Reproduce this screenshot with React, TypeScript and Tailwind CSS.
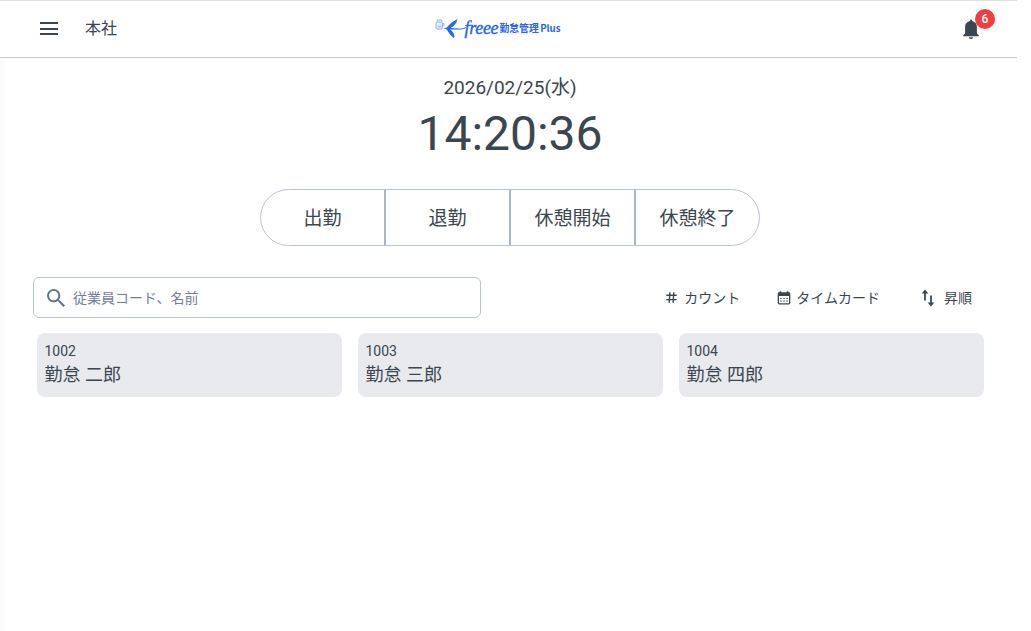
import { useState } from 'react';

interface Employee {
    code: string;
    name: string;
}

const employees: Employee[] = [
    { code: '1002', name: '勤怠 二郎' },
    { code: '1003', name: '勤怠 三郎' },
    { code: '1004', name: '勤怠 四郎' },
];

const actions = ['出勤', '退勤', '休憩開始', '休憩終了'];

function Logo() {
    return (
        <div className="flex items-center h-8 w-[127px] text-[#2864f0] whitespace-nowrap">
            <svg width="31" height="22" viewBox="0 0 31 22" className="shrink-0" fill="none">
                <g stroke="#7fa6f6" strokeWidth=".9">
                    <rect x="1" y="4" width="6.5" height="7" rx="1.5" fill="#e6eefe" />
                    <path d="M2 3.500 2.500 2h4l.5 1.500M3 7.500a1.500 1.500 0 1 0 3-.3M7.500 5.500h1.500v3" />
                </g>
                <path
                    d="M22.500 1C18.500 3 14 6.300 11.800 9.600L8.800 10.500l3 1.100c1.600 3 4.200 6.500 7.300 8.600.5-1.600.3-3.200-.5-4.700-.8-1.600-2-2.800-3.600-3.900l8-.2v-1l-7.500-.5c3.500-1.700 6-4.200 7-8.900z"
                    fill="currentColor"
                />
                <path d="M22.500 10.900c3 .4 5.500-.1 8.500-1.300" stroke="currentColor" strokeWidth="1" />
            </svg>
            <span className="w-[33px] -ml-[1px] text-[18px] leading-none italic tracking-[-0.3px] font-['Liberation_Serif',serif] [-webkit-text-stroke:0.4px] -mt-[3px]">
                freee
            </span>
            <span className="ml-[2px] text-[9.8px] leading-none font-bold font-['Noto_Sans_CJK_JP',sans-serif]">勤怠管理</span>
            <span className="ml-[1.5px] text-[9.600px] leading-none font-bold font-['Noto_Sans_CJK_JP',sans-serif]">Plus</span>
        </div>
    );
}

function BellIcon() {
    return (
        <svg width="16" height="21" viewBox="0 0 16 21" fill="currentColor">
            <path d="M7 1.300a1.200 1.200 0 0 1 2 0v.8c3 .5 4.900 2.700 4.900 5.700v6.700l1.900 1.800v1H.2v-1l1.900-1.800V7.800c0-3 1.900-5.200 4.900-5.700zM5.900 18.200h4.200a2.100 1.700 0 0 1-4.200 0z" />
        </svg>
    );
}

function SearchIcon() {
    return (
        <svg width="18" height="18" viewBox="3 3 17.500 17.500" fill="#64748b">
            <path d="M15.500 14h-.79l-.28-.27A6.471 6.471 0 0 0 16 9.500 6.500 6.500 0 1 0 9.500 16c1.610 0 3.090-.59 4.230-1.570l.27.28v.79l5 4.990L20.490 19l-4.990-5zm-6 0C7.010 14 5 11.990 5 9.500S7.010 5 9.500 5 14 7.010 14 9.500 11.990 14 9.500 14z" />
        </svg>
    );
}

function HashIcon() {
    return (
        <svg width="11" height="11" viewBox="0 0 11 11" fill="none" stroke="currentColor" strokeWidth="1.400">
            <path d="M3.900 .3 3.200 10.700M7.800 .3 7.100 10.700M.3 3.300h10.400M.3 7.600h10.400" />
        </svg>
    );
}

function CalendarIcon() {
    return (
        <svg width="14" height="14" viewBox="0 0 14 14">
            <path
                fill="currentColor"
                fillRule="evenodd"
                d="M2.600 .3h1.700v1h5.400v-1h1.700v1h.5A1.400 1.400 0 0 1 13.300 2.700v9.400a1.400 1.400 0 0 1-1.400 1.400H2.100A1.400 1.400 0 0 1 .7 12.100V2.700a1.400 1.400 0 0 1 1.400-1.400h.5zM2 5v7.300h10V5z"
            />
            <path d="M3.300 7.500h7.500M3.300 10.200h7.500" stroke="currentColor" strokeWidth="1.200" strokeDasharray="1.300 1.800" />
        </svg>
    );
}

function SortIcon() {
    return (
        <svg width="14" height="18" viewBox="0 0 14 18" fill="currentColor">
            <path d="M4 .4 7.300 4.600H4.900v7H3.100v-7H.7zM10 17.500 6.700 13.400h2.400v-7h1.800v7h2.400z" />
        </svg>
    );
}

export default function App() {
    const [keyword, setKeyword] = useState('');

    return (
        <div className="min-h-screen bg-white text-[#3b4650] font-[Roboto,'Noto_Sans_CJK_JP',sans-serif]">
            <div className="w-[1017px] min-h-screen flex flex-col">
                <header className="h-[58px] grid grid-cols-3 items-center border-t border-b border-t-[#e0e0e0] border-b-[#c3c9d2]">
                    <div className="flex items-center pl-10">
                        <button className="w-[18px] h-[13px] -mt-px flex flex-col justify-between" aria-label="メニュー">
                            <span className="h-[2px] w-full bg-current" />
                            <span className="h-[2px] w-full bg-current" />
                            <span className="h-[2px] w-full bg-current" />
                        </button>
                        <span className="ml-[27px] text-base leading-6">本社</span>
                    </div>
                    <div className="flex justify-center pr-[21px]">
                        <Logo />
                    </div>
                    <div className="flex justify-end pr-[38px]">
                        <button className="relative" aria-label="通知">
                            <BellIcon />
                            <span className="absolute -top-[10px] left-[12px] w-5 h-5 rounded-full bg-[#f03e40] text-white text-xs leading-5 font-medium text-center">
                                6
                            </span>
                        </button>
                    </div>
                </header>

                <main className="grow flex flex-col bg-gradient-to-r from-[#fafafa] to-white to-[10px]">
                    <div className="flex flex-col items-center pt-4 pl-[3px]">
                        <p className="text-[19px] leading-7">2026/02/25(水)</p>
                        <p className="pt-[2px] text-[48px] leading-[60px]">14:20:36</p>
                    </div>

                    <div className="mt-[25px] ml-[260px] w-[500px] h-[57px] flex rounded-full border border-[#b9c4d4] overflow-hidden">
                        {actions.map((label) => (
                            <button key={label} className="flex-1 pt-[2px] text-[19px] leading-7 border-r-2 border-[#a9b6c9] last:border-r-0">
                                {label}
                            </button>
                        ))}
                    </div>

                    <div className="mt-[31px] pl-[33px] pr-[45px] flex items-start justify-between">
                        <label className="w-[448px] h-[41px] flex items-center gap-2 pl-[13px] bg-white rounded-md border border-[#b9c4d4]">
                            <SearchIcon />
                            <input
                                type="text"
                                value={keyword}
                                onChange={(e) => setKeyword(e.target.value)}
                                placeholder="従業員コード、名前"
                                className="grow text-sm outline-none placeholder:text-[#74809a]"
                            />
                        </label>
                        <div className="h-[41px] flex items-center text-sm">
                            <button className="flex items-center gap-[7px]">
                                <HashIcon />
                                カウント
                            </button>
                            <button className="ml-[37px] flex items-center gap-[5px]">
                                <CalendarIcon />
                                タイムカード
                            </button>
                            <button className="ml-[41px] flex items-center gap-[9px]">
                                <SortIcon />
                                昇順
                            </button>
                        </div>
                    </div>

                    <div className="mt-[15px] pl-[36.5px] pr-[33.5px] grid grid-cols-3 gap-4">
                        {employees.map((employee) => (
                            <div key={employee.code} className="h-16 px-2 pt-2 rounded-lg bg-[#e8eaee]">
                                <p className="text-sm leading-5">{employee.code}</p>
                                <p className="text-lg leading-7">{employee.name}</p>
                            </div>
                        ))}
                    </div>
                </main>
            </div>
        </div>
    );
}
